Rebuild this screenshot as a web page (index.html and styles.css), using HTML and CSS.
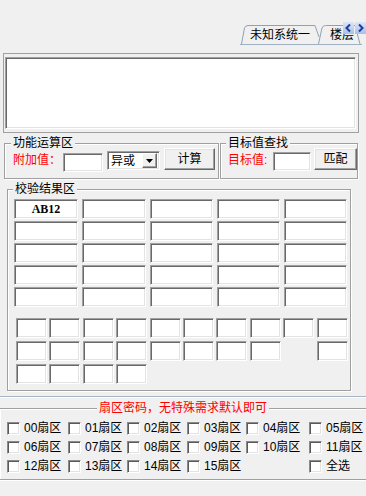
FILE: index.html
```html
<!DOCTYPE html>
<html lang="zh-CN">
<head>
    <meta charset="UTF-8">
    <meta name="viewport" content="width=device-width, initial-scale=1.0">
    <title>扇区工具</title>
    <link rel="stylesheet" href="styles.css">
</head>
<body>
    <!-- 顶部标签页 -->
    <div class="tabbar">
        <div class="tabs">
            <svg class="tab-outline" width="122" height="21" viewBox="0 0 122 21">
                <path d="M1.5 20 L4.5 4 Q5.5 1.5 8 1.5 H75 L79 13" fill="none" stroke="#8fa2b5"/>
                <path d="M78.5 20 L82 4 Q83 1.5 85.5 1.5 H115 L120 20" fill="none" stroke="#8fa2b5"/>
                <path d="M0 20.5 H122" fill="none" stroke="#9fb1c3"/>
            </svg>
            <div class="tab first">未知系统一</div>
            <div class="tab second">楼层</div>
        </div>
        <div class="scroll">
            <span class="arrow"><svg width="11" height="12" viewBox="0 0 11 12"><path d="M7 2.5 L3.5 6 L7 9.5" fill="none" stroke="#1d3c9c" stroke-width="2"/></svg></span>
            <span class="arrow"><svg width="11" height="12" viewBox="0 0 11 12"><path d="M4 2.5 L7.5 6 L4 9.5" fill="none" stroke="#1d3c9c" stroke-width="2"/></svg></span>
        </div>
    </div>

    <div class="panel">
        <div class="memo"></div>
    </div>

    <div class="ops">
        <div class="group calc">
            <div class="legend">功能运算区</div>
            <div class="row">
                <span class="label red add-label">附加值：</span>
                <span class="field add-field"></span>
                <span class="combo">
                    <span class="combo-text">异或</span>
                    <span class="combo-btn"><svg width="7" height="4" viewBox="0 0 7 4"><path d="M0 0 H7 L3.5 4 Z" fill="#000"/></svg></span>
                </span>
                <span class="btn calc-btn">计算</span>
            </div>
        </div>
        <div class="group find">
            <div class="legend">目标值查找</div>
            <div class="row">
                <span class="label red find-label">目标值:</span>
                <span class="field find-field"></span>
                <span class="btn match-btn">匹配</span>
            </div>
        </div>
    </div>

    <div class="group result">
        <div class="legend">校验结果区</div>
        <div class="big-grid">
            <div class="field value">AB12</div>
            <div class="field"></div><div class="field"></div><div class="field"></div><div class="field"></div>
            <div class="field"></div><div class="field"></div><div class="field"></div><div class="field"></div><div class="field"></div>
            <div class="field"></div><div class="field"></div><div class="field"></div><div class="field"></div><div class="field"></div>
            <div class="field"></div><div class="field"></div><div class="field"></div><div class="field"></div><div class="field"></div>
            <div class="field"></div><div class="field"></div><div class="field"></div><div class="field"></div><div class="field"></div>
        </div>
        <div class="small-grid">
            <div class="field"></div><div class="field"></div><div class="field"></div><div class="field"></div><div class="field"></div>
            <div class="field"></div><div class="field"></div><div class="field"></div><div class="field"></div><div class="field"></div>
            <div class="field"></div><div class="field"></div><div class="field"></div><div class="field"></div><div class="field"></div>
            <div class="field"></div><div class="field"></div><div class="field"></div><div class="blank"></div><div class="field"></div>
            <div class="field"></div><div class="field"></div><div class="field"></div><div class="field"></div>
        </div>
    </div>

    <div class="sep"></div>

    <div class="group sectors">
        <div class="legend red center">扇区密码，无特殊需求默认即可</div>
        <div class="checks">
            <label class="check"><span class="box"></span>00扇区</label>
            <label class="check"><span class="box"></span>01扇区</label>
            <label class="check"><span class="box"></span>02扇区</label>
            <label class="check"><span class="box"></span>03扇区</label>
            <label class="check"><span class="box"></span>04扇区</label>
            <label class="check"><span class="box"></span>05扇区</label>
            <label class="check"><span class="box"></span>06扇区</label>
            <label class="check"><span class="box"></span>07扇区</label>
            <label class="check"><span class="box"></span>08扇区</label>
            <label class="check"><span class="box"></span>09扇区</label>
            <label class="check"><span class="box"></span>10扇区</label>
            <label class="check"><span class="box"></span>11扇区</label>
            <label class="check"><span class="box"></span>12扇区</label>
            <label class="check"><span class="box"></span>13扇区</label>
            <label class="check"><span class="box"></span>14扇区</label>
            <label class="check"><span class="box"></span>15扇区</label>
            <div></div>
            <label class="check"><span class="box"></span>全选</label>
        </div>
    </div>
</body>
</html>
```

FILE: styles.css
```css
body {
    margin: 0;
    width: 366px;
    height: 496px;
    overflow: hidden;
    background: #f0f0f0;
    font-family: 'Liberation Sans', 'Noto Sans CJK SC', sans-serif;
    font-size: 12px;
    line-height: 14px;
    color: #000;
}
.red {
    color: #ff0000;
}
/* 标签页 */
.tabbar {
    position: relative;
    height: 53px;
    box-sizing: border-box;
    padding: 24px 6px 0 0;
    display: flex;
    justify-content: flex-end;
    align-items: flex-start;
}
.tabs {
    position: relative;
    display: flex;
    height: 21px;
}
.tab-outline {
    position: absolute;
    left: -2px;
    top: 0;
}
.tab {
    position: relative;
    height: 20px;
    line-height: 22px;
    box-sizing: border-box;
}
.tab.first {
    width: 78px;
    padding-left: 8px;
}
.tab.second {
    width: 42px;
    padding-left: 12px;
    margin-left: -2px;
}
.scroll {
    position: absolute;
    top: 22px;
    right: 0;
    display: flex;
    gap: 1px;
}
.arrow {
    display: block;
    width: 11px;
    height: 12px;
    background: linear-gradient(#dce6f8, #a9bfea);
}
.arrow svg {
    display: block;
}
/* 上方文本框 */
.panel {
    margin-left: 3px;
    width: 356px;
    box-sizing: border-box;
    border: 1px solid #a0a0a0;
    padding: 3px 2px 3px 1px;
}
.memo {
    height: 72px;
    background: #fff;
    box-sizing: border-box;
    border: 1px solid;
    border-color: #a0a0a0 #fff #fff #a0a0a0;
    box-shadow: inset 1px 1px #696969, inset -1px -1px #e3e3e3;
}
/* 分组框 */
.group {
    box-sizing: border-box;
    border: 1px solid #a0a0a0;
    box-shadow: inset 1px 1px #fff, 1px 1px #fff;
}
.legend {
    width: fit-content;
    margin: -8px 0 0 5px;
    padding: 0 2px;
    line-height: 14px;
    background: #f0f0f0;
}
.legend.center {
    margin-left: auto;
    margin-right: auto;
}
.ops {
    display: flex;
    gap: 1px;
    margin-top: 10px;
}
.calc {
    margin-left: 4px;
    width: 215px;
    height: 36px;
}
.calc .legend {
    margin-left: 6px;
}
.find {
    width: 138px;
    height: 36px;
}
.row {
    display: flex;
    align-items: flex-start;
    margin-top: -3px;
}
.label {
    margin-top: 6px;
    white-space: nowrap;
}
.add-label {
    width: 50px;
    padding-left: 8px;
}
.find-label {
    width: 45px;
    padding-left: 7px;
}
.field {
    display: block;
    background: #fff;
    box-sizing: border-box;
    border: 1px solid;
    border-color: #a0a0a0 #fff #fff #a0a0a0;
    box-shadow: inset 1px 1px #696969, inset -1px -1px #e3e3e3;
}
.add-field {
    width: 40px;
    height: 19px;
    margin-top: 6px;
}
.find-field {
    width: 38px;
    height: 19px;
    margin-top: 5px;
}
.combo {
    display: flex;
    align-items: center;
    width: 53px;
    height: 19px;
    margin: 4px 0 0 4px;
    box-sizing: border-box;
    background: #fff;
    border: 1px solid;
    border-color: #a0a0a0 #fff #fff #a0a0a0;
    box-shadow: inset 1px 1px #696969, inset -1px -1px #e3e3e3;
    padding: 1px 2px 1px 3px;
}
.combo-text {
    flex: 1;
    font-size: 12px;
}
.combo-btn {
    display: flex;
    align-items: center;
    justify-content: center;
    width: 15px;
    height: 15px;
    box-sizing: border-box;
    background: #f0f0f0;
    border: 1px solid;
    border-color: #fff #696969 #696969 #fff;
    box-shadow: inset -1px -1px #a0a0a0;
}
.btn {
    display: flex;
    align-items: center;
    justify-content: center;
    box-sizing: border-box;
    background: #f0f0f0;
    border: 1px solid;
    border-color: #fff #696969 #696969 #fff;
    box-shadow: inset -1px -1px #a0a0a0, inset 1px 1px #e3e3e3;
}
.calc-btn {
    width: 51px;
    height: 22px;
    margin: 1px 0 0 4px;
}
.match-btn {
    width: 43px;
    height: 22px;
    margin: 1px 0 0 3px;
}
/* 校验结果区 */
.result {
    margin: 10px 0 0 7px;
    width: 344px;
    height: 202px;
}
.big-grid {
    display: grid;
    grid-template-columns: 64px 64px 63px 63px 63px;
    grid-auto-rows: 20px;
    column-gap: 4px;
    row-gap: 2px;
    margin: 3px 0 0 6px;
}
.value {
    text-align: center;
    line-height: 19px;
    font-family: 'Liberation Serif', serif;
    font-weight: bold;
    font-size: 12px;
}
.small-grid {
    display: grid;
    grid-template-columns: repeat(10, 31px);
    grid-auto-rows: 20px;
    column-gap: 2.4px;
    row-gap: 3px;
    margin: 11px 0 0 8px;
}
.sep {
    margin-top: 5px;
    height: 1px;
    background: #a6b6c6;
    border-bottom: 1px solid #fff;
}
/* 扇区密码 */
.sectors {
    margin: 10px -1px 0;
    height: 72px;
}
.checks {
    display: grid;
    grid-template-columns: 61px 59px 60px 59px 63px 58px;
    grid-auto-rows: 14px;
    row-gap: 5px;
    margin-top: 6px;
    padding-left: 7px;
}
.check {
    display: flex;
    align-items: center;
    gap: 4px;
    white-space: nowrap;
}
.box {
    width: 13px;
    height: 13px;
    box-sizing: border-box;
    background: #fff;
    border: 1px solid;
    border-color: #8a8a8a #fff #fff #8a8a8a;
    box-shadow: inset 1px 1px #5a5a5a, inset -1px -1px #e3e3e3;
}
```
